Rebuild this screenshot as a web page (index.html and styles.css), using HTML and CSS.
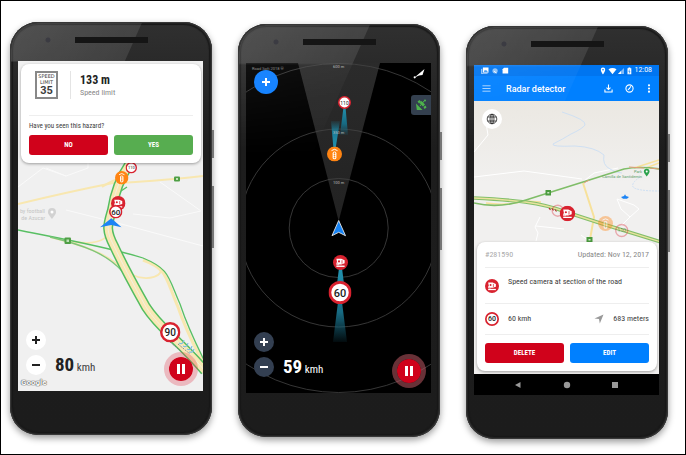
FILE: index.html
```html
<!DOCTYPE html>
<html lang="en">
<head>
<meta charset="utf-8">
<title>Radar detector</title>
<link rel="stylesheet" href="styles.css">
</head>
<body>
<svg class="sprite" aria-hidden="true">
  <defs>
    <symbol id="camera" viewBox="0 0 20 20">
      <circle cx="10" cy="10" r="10" fill="#d8222f"/>
      <path d="M4.500 5h6.500l4.500 2v4l-4.500 1.500h-5z" fill="#fff"/>
      <circle cx="8" cy="8.500" r="1.400" fill="#d8222f"/>
      <path d="M12 7v4.500" stroke="#d8222f" stroke-width="1"/>
      <path d="M4.500 15h11" stroke="#fff" stroke-width="1.800"/>
      <path d="M5 10v3h3" stroke="#fff" stroke-width="1" fill="none"/>
    </symbol>
    <symbol id="lights" viewBox="0 0 20 20">
      <circle cx="10" cy="10" r="10" fill="#ff8412"/>
      <rect x="7.500" y="6.500" width="5" height="10.500" rx="2.500" fill="#fff"/>
      <path d="M6 5.500q4-3.500 8 0" stroke="#fff" stroke-width="1.300" fill="none"/>
      <circle cx="10" cy="9" r="1.200" fill="#ff8412"/>
      <circle cx="10" cy="11.800" r="1.200" fill="#ff8412"/>
      <circle cx="10" cy="14.600" r="1.200" fill="#ff8412"/>
    </symbol>
    <symbol id="ring" viewBox="0 0 20 20">
      <circle cx="10" cy="10" r="8.800" fill="#fff" stroke="#d8222f" stroke-width="2.400"/>
    </symbol>
    <linearGradient id="beam-up" x1="0" y1="1" x2="0" y2="0"><stop offset="0" stop-color="#2393b0"/><stop offset=".6" stop-color="#1b7d98"/><stop offset="1" stop-color="#1b7d98" stop-opacity=".1"/></linearGradient>
    <linearGradient id="beam-down" x1="0" y1="0" x2="0" y2="1"><stop offset="0" stop-color="#2393b0"/><stop offset=".6" stop-color="#176a82"/><stop offset="1" stop-color="#176a82" stop-opacity=".1"/></linearGradient>
    <linearGradient id="sector" x1="0" y1="0" x2="0" y2="1"><stop offset="0" stop-color="#2b2b2b"/><stop offset="1" stop-color="#222"/></linearGradient>
  </defs>
</svg>

<main class="gallery">
  <section class="phone phone-1">
    <div class="screen map-light">
      <svg class="scene" viewBox="0 0 185 330" preserveAspectRatio="xMidYMid slice" role="img" aria-label="Road map">
        <g fill="none" stroke="#fafafa" stroke-width="1">
          <path d="M0 126 25 107l23 8 22-8V98M28 107l20 8M142 121l41 29-31 7-37-4M48 149 92 160l93 25"/>
        </g>
        <g fill="none" stroke="#f8e7b0">
          <path d="M0 143 Q50 131 95 122 Q130 121 185 115" stroke-width="1.800"/>
          <path d="M115 214C128 221 150 215 140 205M48 180c20 3 34 3 41-5M84 126q12-8 18-8" stroke-width="1.800"/>
          <path d="M32 176 C60 183 92 192 108 212" stroke-width="2"/>
          <path d="M125 199C150 208 147 216 160 246 168 270 178 288 186 304" stroke-width="3"/>
        </g>
        <g fill="none" stroke="#58bf63" stroke-width="1.300">
          <path d="M0 169C40 177 90 186 125 197 152 208 150 216 162 243 170 267 180 287 186 299"/>
          <path d="M32 176C65 184 88 192 105 211" stroke="#7cc57a"/>
          <path d="M103 130l6-4"/>
        </g>
        <g class="highway">
          <path class="road-edge" d="M112 102C100 120 96 135 94 149 90 163 87 168 96 185 102 198 115 223 128 246 142 268 160 278 187 310"/>
          <path class="road-fill" d="M112 102C100 120 96 135 94 149 90 163 87 168 96 185 102 198 115 223 128 246 142 268 160 278 187 310"/>
          <path class="road-mid" d="M112 102C100 120 96 135 94 149 90 163 87 168 96 185 102 198 115 223 128 246 142 268 160 278 187 310"/>
        </g>
        <g fill="#4f9f45"><rect x="46.500" y="176.500" width="6.500" height="6.500" rx="1"/><rect x="156" y="115.500" width="6" height="5" rx="1"/></g>
        <path d="M48.500 178.500h2.500v2.500h-2.500zM158 117h2v2h-2z" fill="#bfe0b8"/>
        <g class="poi"><text x="27" y="152" text-anchor="end">by football</text><text x="27" y="159" text-anchor="end">de Azucar</text></g>
        <path d="M34 158c-3-4-4-5-4-7a4 4 0 0 1 8 0c0 2-1 3-4 7z" fill="#d2d2d2"/><circle cx="34" cy="151" r="1.500" fill="#fff"/>
        <use href="#ring" x="107.500" y="101" width="11.500" height="11.500"/>
        <text x="113.300" y="108.400" class="sign-thin" font-size="4">110</text>
        <use href="#lights" x="97" y="110" width="13.500" height="13.500"/>
        <use href="#camera" x="93" y="135" width="14.500" height="14.500"/>
        <use href="#ring" x="91" y="144" width="13.500" height="13.500"/>
        <text x="97.700" y="153.600" class="sign" font-size="8">60</text>
        <path d="M93.300 157.300 103.500 166.300 93.300 164 82 166.300z" fill="#1d84f5"/>
        <path d="M152 281l12 10M160 283l12 10" stroke="#777" stroke-width=".8" stroke-dasharray="2 1"/>
        <path d="M161 282q4 2 5-3M165 285q4 2 5-3M169 288q4 2 5-3M171 291q4 1 5-3" fill="none" stroke="#7dbfe0" stroke-width="1.200"/>
        <use href="#ring" x="142" y="261" width="20.500" height="20.500"/>
        <text x="152.300" y="275" class="sign" font-size="10">90</text>
      </svg>

      <article class="card hazard">
        <div class="hazard-head">
          <div class="limit-sign"><span>SPEED</span><span>LIMIT</span><strong>35</strong></div>
          <div class="hazard-text"><h2>133 m</h2><p>Speed limit</p></div>
        </div>
        <p class="question">Have you seen this hazard?</p>
        <div class="actions">
          <button type="button" class="btn btn-red">NO</button>
          <button type="button" class="btn btn-green">YES</button>
        </div>
      </article>

      <div class="hud">
        <div class="zoomers">
          <button type="button" class="round" aria-label="Zoom in"><svg viewBox="0 0 20 20"><path d="M6 10h8M10 6v8"/></svg></button>
          <button type="button" class="round" aria-label="Zoom out"><svg viewBox="0 0 20 20"><path d="M6 10h8"/></svg></button>
        </div>
        <p class="speed"><strong>80</strong> kmh</p>
        <button type="button" class="pause" aria-label="Pause"><svg viewBox="0 0 24 24"><path d="M9.500 7v10M14.500 7v10"/></svg></button>
      </div>
      <span class="google">Google</span>
    </div>
  </section>

  <section class="phone phone-2">
    <div class="screen radar">
      <svg class="scene" viewBox="0 0 185 330" preserveAspectRatio="xMidYMid slice" role="img" aria-label="Radar view">
        <path d="M52 0H134L92.700 158z" fill="url(#sector)"/>
        <g fill="none" stroke="#444" stroke-width=".8">
          <circle cx="92.700" cy="165" r="49.500"/><circle cx="92.700" cy="165" r="99"/><circle cx="92.700" cy="165" r="164.500"/>
        </g>
        <path d="M97.500 44h2l2.500 28H94z" fill="url(#beam-down)"/>
        <path d="M87.500 86h2L94 58h-9z" fill="url(#beam-up)"/>
        <path d="M93 205h3l2 16h-7zM92 239h4l5 40H87z" fill="url(#beam-down)"/>
        <g fill="#bbb" class="tiny" text-anchor="middle">
          <text x="92.700" y="5">600 m</text><text x="92.700" y="71">350 m</text><text x="92.700" y="121">100 m</text>
        </g>
        <text x="6" y="6.500" class="tiny" fill="#888">Road Soft 2018 ®</text>
        <use href="#ring" x="92" y="33" width="13" height="13"/>
        <text x="98.500" y="41.500" class="sign-thin" font-size="5">110</text>
        <use href="#lights" x="81" y="83.500" width="15" height="15"/>
        <path d="M92.700 157.500 99.500 172.700 92.700 169.300 86 172.700z" fill="#1583f5" stroke="#e6e6e6" stroke-width=".9"/>
        <use href="#camera" x="87" y="192" width="15" height="15"/>
        <use href="#ring" x="82.500" y="218" width="23" height="23"/>
        <text x="94" y="233.500" class="sign" font-size="11">60</text>
        <path d="M168.500 14.500 178.500 6 176.500 12 173 12.500z" fill="#fff"/><circle cx="168.700" cy="14.300" r="1.100" fill="#fff"/>
      </svg>
      <button type="button" class="add" aria-label="Add"><svg viewBox="0 0 24 24"><path d="M8 12h8M12 8v8"/></svg></button>
      <button type="button" class="gps" aria-label="Satellite"><svg viewBox="0 0 20 20" fill="#4eb44c"><path d="M5 8.500 11.500 15H5.800z"/><path d="M8.500 8 10.500 6l3.500 3.500-2 2z"/><path d="M6.500 6.500l2-1.500 1.500 1.500-2 2zM12.500 12l2-1.500 1 2-2 1.500z"/><path d="M9 11l4.500-5.500" stroke="#4eb44c" stroke-width="1"/><circle cx="14" cy="5.500" r="1"/></svg></button>
      <div class="hud">
        <div class="zoomers">
          <button type="button" class="round" aria-label="Zoom in"><svg viewBox="0 0 20 20"><path d="M6 10h8M10 6v8"/></svg></button>
          <button type="button" class="round" aria-label="Zoom out"><svg viewBox="0 0 20 20"><path d="M6 10h8"/></svg></button>
        </div>
        <p class="speed"><strong>59</strong> kmh</p>
        <button type="button" class="pause" aria-label="Pause"><svg viewBox="0 0 24 24"><path d="M9.500 7v10M14.500 7v10"/></svg></button>
      </div>
    </div>
  </section>

  <section class="phone phone-3">
    <div class="screen details">
      <div class="statusbar">
        <svg class="status-left" viewBox="0 0 32 8" aria-hidden="true">
          <g fill="#fff"><path d="M2 .5h6v5.500H2z"/><path d="M.8 2v5.300H7" fill="none" stroke="#fff" stroke-width=".8"/><path d="M3 5l1.300-2 1 1.200L6 3.400 7.200 5z" fill="#0078f0"/>
          <circle cx="15" cy="4" r="2.800" opacity=".55"/><path d="M14 4.500l2.500 2" stroke="#fff"/><path d="M24.500.800H29V7h-6V2.300z"/></g>
        </svg>
        <svg class="status-right" viewBox="0 0 32 8" aria-hidden="true">
          <g fill="#fff"><path d="M3 .5a2.200 2.200 0 0 1 2.200 2.300C5.200 4.500 3 7.500 3 7.500S.8 4.500.8 2.800A2.200 2.200 0 0 1 3 .5z"/><path d="M8.500 2.200q4-2.600 8 0L12.500 7.300z"/><path d="M24 1v6h-6z" opacity=".5"/><path d="M21 4v3h-3z"/><path d="M27.500 1.300h1V.5h1.800v.8h1v6h-3.800z"/></g><circle cx="3" cy="2.700" r=".8" fill="#0078f0"/>
          <path d="M29.600 2.500l-.8 2h1.200l-.8 2" stroke="#0078f0" stroke-width=".6" fill="none"/>
        </svg>
        <time>12:08</time>
      </div>
      <header class="appbar">
        <button type="button" class="icon-btn" aria-label="Menu"><svg viewBox="0 0 10 10"><path d="M.5 2h9M.5 5h9M.5 8h9" stroke-width=".9" opacity=".8"/></svg></button>
        <h1>Radar detector</h1>
        <button type="button" class="icon-btn" aria-label="Download"><svg viewBox="0 0 10 10"><path d="M5 .5V6M2.800 4 5 6.200 7.200 4M1 6v2.800h8V6"/></svg></button>
        <button type="button" class="icon-btn" aria-label="History"><svg viewBox="0 0 10 10"><circle cx="5" cy="5" r="4"/><path d="M6.500 2.500 5 5v0l-1.800 1.500"/></svg></button>
        <button type="button" class="icon-btn icon-more" aria-label="More"><svg viewBox="0 0 6 10"><g class="dots"><circle cx="3" cy="1.500" r="1.200"/><circle cx="3" cy="5" r="1.200"/><circle cx="3" cy="8.500" r="1.200"/></g></svg></button>
      </header>
      <div class="mapview">
        <svg class="scene" viewBox="0 36 185 273" preserveAspectRatio="xMidYMid slice" role="img" aria-label="Road map">
          <g fill="none" stroke="#fff" stroke-width="1">
            <path d="M0 87l14-17-2-12M0 112l50-6 58 8M62 176l2-8-3-6 5-10M143 134l4 10 9 8 9-8-5-4-17-6M156 152l-8 8M62 161l28 3M115 176l-8-6M110 116l10-8 24-5"/>
          </g>
          <g fill="none" stroke="#cfe0f3" stroke-width="1">
            <path d="M88 47q25 8 23 13-3 4-14 9-8 5-18 10-2 3 22 2 20 1 29 9-2 10 6 14 6 4 12 4"/>
            <path d="M166 112q-9 6-7 10 4 4 26 4" stroke-dasharray="2 1"/>
          </g>
          <g fill="none" stroke="#f7e19b">
            <path d="M109 118l11 34-5 28" stroke-width="2"/><path d="M160 103l25-8M172 103l13-5M12 138q20 3 40-2l15 1" stroke-width="1.400"/>
          </g>
          <g fill="none">
            <path d="M0 133C40 135 66 137 92 147L132 160 187 177" stroke="#83bf6b" stroke-width="3.600"/>
            <path d="M0 133C40 135 66 137 92 147L132 160 187 177" stroke="#eae29d" stroke-width="1.400"/>
            <path d="M0 138Q25 144 52 135L74 128 109 117 150 104Q165 101 186 104" stroke="#7fbd68" stroke-width="1.600"/>
            <path d="M155 102l15 1M176 103l9 1M110 118l5-3" stroke="#e39d77" stroke-width="1"/>
          </g>
          <g fill="#4b9b3f"><rect x="71.500" y="125" width="5.500" height="5.500"/><rect x="112.500" y="172" width="6" height="6"/></g>
          <path d="M73.300 127h2v1.600h-2zM114.500 174h2v1.600h-2z" fill="#cde6c6"/>
          <g class="tiny" fill="#5ba06a" text-anchor="end"><text x="168" y="107.500">Park</text><text x="168" y="112.500">Camilla de Santidemin</text></g>
          <path d="M172.700 111.500c-2-2.500-2.800-3.600-2.800-5a2.800 2.800 0 0 1 5.600 0c0 1.400-.8 2.500-2.800 5z" fill="#2ba24c"/><circle cx="172.700" cy="106.400" r="1" fill="#fff"/>
          <path d="M147 132l3-1 1-1.800 1 1.800 3 1-2 1.800h-4z" fill="#1d84f5"/>
          <path d="M75 143l1.500 2M78 143.500l1.500 2M81 144.500l1.500 2" stroke="#b3302a" stroke-width="1.200"/>
          <g opacity=".35" fill="none" stroke="#d8222f" stroke-width="1.400"><circle cx="83.700" cy="145.700" r="5.500"/><circle cx="147.700" cy="165.500" r="6"/></g>
          <g opacity=".4"><use href="#lights" x="124" y="151" width="15" height="15"/><text x="147.800" y="167.300" class="sign-thin" font-size="5">110</text></g>
          <use href="#camera" x="85.700" y="140.700" width="15.500" height="15.500"/>
        </svg>
        <button type="button" class="globe" aria-label="Map type"><svg viewBox="0 0 20 20"><circle cx="10" cy="10" r="4.800"/><ellipse cx="10" cy="10" rx="2" ry="4.800"/><path d="M5.600 8h8.800M5.600 12h8.800M10 5v10"/></svg></button>
        <article class="card camera-card">
          <div class="row row-id"><span>#281590</span><span class="updated">Updated: Nov 12, 2017</span></div>
          <div class="row row-type"><svg class="row-icon" viewBox="0 0 20 20"><use href="#camera"/></svg><span>Speed camera at section of the road</span></div>
          <div class="row row-stats">
            <svg class="row-icon" viewBox="0 0 20 20"><use href="#ring"/><text x="10" y="13.500" class="sign" font-size="10">60</text></svg>
            <span class="stat-speed">60 kmh</span>
            <svg class="row-arrow" viewBox="0 0 10 10"><path d="M.5 4.500 9.500.500 5.800 9.500 5 5z" fill="#999"/></svg>
            <span>683 meters</span>
          </div>
          <div class="actions">
            <button type="button" class="btn btn-red">DELETE</button>
            <button type="button" class="btn btn-blue">EDIT</button>
          </div>
        </article>
      </div>
      <nav class="navbar">
        <button type="button" aria-label="Back"><svg viewBox="0 0 8 8"><path d="M6.500 1v6L1 4z"/></svg></button>
        <button type="button" aria-label="Home"><svg viewBox="0 0 8 8"><circle cx="4" cy="4" r="3.200"/></svg></button>
        <button type="button" aria-label="Recent"><svg viewBox="0 0 8 8"><path d="M1 1h6v6H1z"/></svg></button>
      </nav>
    </div>
  </section>
</main>
</body>
</html>
```
FILE: styles.css
```css
* { box-sizing: border-box; }

body, h1, h2, p { margin: 0; }

body {
  background: #fff;
  color: #3c3c3c;
  font: 7px/10px "Roboto Condensed", Roboto, sans-serif;
}

button {
  border: 0;
  padding: 0;
  font: inherit;
  cursor: pointer;
}

svg { display: block; }

.sprite { position: absolute; width: 0; height: 0; }

.gallery {
  display: grid;
  grid-template-columns: repeat(3, 1fr);
  align-items: start;
  min-height: 100vh;
  padding-top: 21px;
  border: 1px solid #000;
}

/* Handset */
.phone {
  position: relative;
  margin: 0 17px 0 9px;
  padding: 39px 9px 44px 8px;
  border-radius: 28px;
  background: linear-gradient(#303030, #1d1d1d 30%, #1c1c1c);
  box-shadow: inset 0 0 2px 1px #444, inset 0 0 1px 3px #171717, 0 3px 7px rgba(0, 0, 0, .4);
}
.phone-2 { margin-top: 2px; }
.phone-3 { margin-top: 4px; }

/* Glass reflection, speaker and front camera */
.phone::before {
  content: "";
  position: absolute;
  z-index: 2;
  inset: 1px;
  border-radius: 27px;
  pointer-events: none;
  background:
    radial-gradient(circle at 37px 17px, #3b3b42 0 2px, transparent 3px),
    linear-gradient(#151515, #151515) 64px 14px / 73px 6px no-repeat,
    linear-gradient(114deg, rgba(255, 255, 255, .17), rgba(255, 255, 255, .1) 119px, transparent 120px) 0 0 / 100% 130px no-repeat;
  -webkit-mask-image: linear-gradient(#000 38px, rgba(0, 0, 0, .4) 40px, transparent 130px);
  mask-image: linear-gradient(#000 38px, rgba(0, 0, 0, .4) 40px, transparent 130px);
}
.phone-1::before {
  -webkit-mask-image: linear-gradient(#000 38px, transparent 39px);
  mask-image: linear-gradient(#000 38px, transparent 39px);
}
/* Power and volume keys */
.phone::after {
  content: "";
  position: absolute;
  top: 108px;
  right: -2px;
  width: 2px;
  height: 118px;
  background: linear-gradient(#777 28px, transparent 28px 56px, #777 56px);
}

.screen {
  position: relative;
  aspect-ratio: 185 / 330;
  overflow: hidden;
}

.scene {
  position: absolute;
  inset: 0;
  width: 100%;
  height: 100%;
}

.map-light { background: #f0f0f0; }
.radar { background: #000; }

.highway { fill: none; }
.road-edge { stroke: #53bd5f; stroke-width: 10; }
.road-fill { stroke: #f8e8b4; stroke-width: 7; }
.road-mid { stroke: #f3efe0; stroke-width: 1; }
.poi { fill: #c6c6c6; font-size: 6px; }
.tiny { font-size: 4px; font-family: Roboto, sans-serif; }
.sign, .sign-thin { text-anchor: middle; fill: #222; font-family: Roboto, sans-serif; font-weight: 500; }
.sign-thin { font-weight: 400; }

/* Cards */
.card {
  position: absolute;
  left: 3px;
  right: 2px;
  padding: 0 8px 8px;
  border-radius: 8px;
  background: #fff;
  box-shadow: 0 1px 3px rgba(0, 0, 0, .35);
}
.hazard { top: 3px; }

.hazard-head {
  display: flex;
  gap: 12px;
  padding: 7px 6px 16px;
  border-bottom: 1px solid #eee;
}
.limit-sign {
  display: flex;
  flex-direction: column;
  align-items: center;
  width: 23px;
  height: 28px;
  border: 2px double #888;
  font: 5px/6px "DejaVu Sans", sans-serif;
}
.limit-sign strong { font: 700 11px/12px Roboto, sans-serif; }
.hazard-text {
  padding-left: 9px;
  border-left: 1px solid #e4e4e4;
}
.hazard-text h2 { font-size: 12px; line-height: 18px; color: #222; }
.hazard-text p { font-size: 8px; line-height: 8px; color: #888; }
.question { padding: 5px 0 4px; }

.actions { display: flex; gap: 6px; }
.btn {
  flex: 1;
  height: 20px;
  border-radius: 3px;
  color: #fff;
  font-weight: 700;
}
.btn-red { background: #d0021b; }
.btn-green { background: #57ad50; }
.btn-blue { background: #0080ff; }

/* Driving controls */
.hud {
  position: absolute;
  left: 8px;
  right: 5px;
  bottom: 16px;
  display: flex;
  align-items: flex-end;
}
.zoomers { display: grid; gap: 5px; }
.round {
  width: 20px;
  height: 20px;
  border-radius: 50%;
  background: #fff;
  stroke: #222;
}
.round path { stroke-width: 2; }
.radar .round { background: #333f51; stroke: #fff; }
.speed {
  flex: 1;
  padding-left: 9px;
  font-size: 11px;
  line-height: 14px;
}
.speed strong { font-size: 19px; color: #222; }
.radar .speed, .radar .speed strong { color: #fff; }
.pause {
  width: 34px;
  height: 34px;
  margin-bottom: -11px;
  border: 5px solid rgba(225, 60, 80, .3);
  border-radius: 50%;
  background: #d0021b padding-box;
}
.radar .pause { border-color: rgba(190, 90, 100, .55); }
.pause path { stroke: #fff; stroke-width: 3; }

.google {
  position: absolute;
  left: 3px;
  bottom: 4px;
  color: #fff;
  font: 700 8px/8px Roboto, sans-serif;
  text-shadow: 0 0 1px #555, 0 0 1px #555, 0 0 1px #555;
}

.add {
  position: absolute;
  left: 8px;
  top: 7px;
  width: 24px;
  height: 24px;
  border-radius: 50%;
  background: #0d7eff;
}
.add path { stroke: #fff; stroke-width: 2; }
.gps {
  position: absolute;
  right: 0;
  top: 32px;
  width: 20px;
  height: 20px;
  border-radius: 3px 0 0 3px;
  background: #34404f;
}

/* Details screen */
.details { display: flex; flex-direction: column; }
.statusbar {
  display: flex;
  align-items: center;
  height: 11px;
  padding: 0 7px;
  background: #0075f0;
  color: #fff;
}
.status-left { width: 30px; }
.status-right { width: 32px; margin-left: auto; }
.statusbar time { margin-left: 3px; font: 7px/11px Roboto, sans-serif; }
.appbar {
  display: flex;
  align-items: center;
  gap: 12px;
  height: 25px;
  padding: 0 7px 0 8px;
  background: #0080ff;
  color: #fff;
}
.appbar h1 { flex: 1; padding-left: 3px; font: 500 9px/12px Roboto, sans-serif; }
.icon-btn { width: 9px; height: 9px; background: none; }
.icon-more { width: 6px; }
.icon-btn svg { width: 100%; height: 100%; overflow: visible; fill: none; stroke: #fff; stroke-width: 1.200; }
.icon-btn .dots { fill: #fff; stroke: none; }

.mapview { position: relative; flex: 1; background: linear-gradient(#ebe8e2, #f1f0ef 30%); }
.globe {
  position: absolute;
  left: 8px;
  top: 8px;
  width: 20px;
  height: 20px;
  border-radius: 50%;
  background: #fff;
}
.globe svg { fill: none; stroke: #222; stroke-width: .8; }

.camera-card { bottom: 3px; }
.row {
  display: flex;
  align-items: center;
  height: 26px;
  border-bottom: 1px solid #eee;
  font-size: 8px;
}
.row-id { justify-content: space-between; color: #aaa; }
.updated { color: #888; }
.row-type { height: 36px; gap: 9px; }
.row-type span { padding-bottom: 8px; }
.row-stats { height: 31px; gap: 9px; margin-bottom: 8px; }
.row-icon { width: 14px; height: 14px; }
.stat-speed { flex: 1; }
.row-arrow { width: 10px; height: 10px; }

.navbar {
  display: flex;
  justify-content: space-evenly;
  align-items: center;
  height: 21px;
  background: #000;
}
.navbar button { width: 8px; height: 8px; background: none; fill: #999; }
```
